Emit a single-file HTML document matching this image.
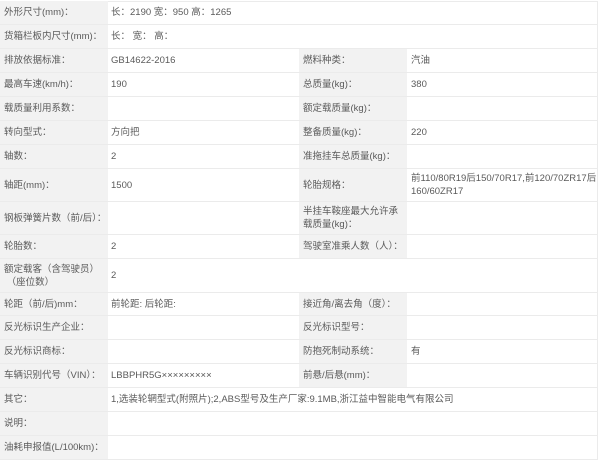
<!DOCTYPE html>
<html><head><meta charset="utf-8"><style>
*{margin:0;padding:0;box-sizing:border-box}
body{width:600px;height:461px;background:#fff;overflow:hidden;font-family:"Liberation Sans","Noto Sans CJK SC",sans-serif;font-size:9.5px;color:#5a5a5a;position:relative}
.r{position:absolute;left:0;width:598px;border-bottom:1px solid #ebebeb;border-right:1px solid #ebebeb}
.c{position:absolute;top:0;bottom:0;display:flex;align-items:center;line-height:13px}
.l1{left:0;width:108px;background:#f2f2f2;padding-left:4px}
.v1{left:108px;width:191px;padding-left:3px}
.l2{left:299px;width:108px;background:#f2f2f2;padding-left:4px}
.v2{left:407px;width:191px;padding-left:4px}
.vf{left:108px;width:490px;padding-left:3px}
</style></head><body>
<div class="r" style="top:0;height:2px;border-right:none"></div>
<div class="r" style="top:1px;height:24px"><div class="c l1">外形尺寸(mm)：</div><div class="c vf">长：2190 宽：950 高：1265</div></div>
<div class="r" style="top:25px;height:24px"><div class="c l1">货箱栏板内尺寸(mm)：</div><div class="c vf">长： 宽： 高：</div></div>
<div class="r" style="top:49px;height:24px"><div class="c l1">排放依据标准：</div><div class="c v1">GB14622-2016</div><div class="c l2">燃料种类：</div><div class="c v2">汽油</div></div>
<div class="r" style="top:73px;height:24px"><div class="c l1">最高车速(km/h)：</div><div class="c v1">190</div><div class="c l2">总质量(kg)：</div><div class="c v2">380</div></div>
<div class="r" style="top:97px;height:24px"><div class="c l1">载质量利用系数：</div><div class="c v1"></div><div class="c l2">额定载质量(kg)：</div><div class="c v2"></div></div>
<div class="r" style="top:121px;height:24px"><div class="c l1">转向型式：</div><div class="c v1">方向把</div><div class="c l2">整备质量(kg)：</div><div class="c v2">220</div></div>
<div class="r" style="top:145px;height:24px"><div class="c l1">轴数：</div><div class="c v1">2</div><div class="c l2">准拖挂车总质量(kg)：</div><div class="c v2"></div></div>
<div class="r" style="top:169px;height:33px"><div class="c l1">轴距(mm)：</div><div class="c v1">1500</div><div class="c l2">轮胎规格：</div><div class="c v2">前110/80R19后150/70R17,前120/70ZR17后160/60ZR17</div></div>
<div class="r" style="top:202px;height:33px"><div class="c l1">钢板弹簧片数（前/后）：</div><div class="c v1"></div><div class="c l2">半挂车鞍座最大允许承载质量(kg)：</div><div class="c v2"></div></div>
<div class="r" style="top:235px;height:24px"><div class="c l1">轮胎数：</div><div class="c v1">2</div><div class="c l2">驾驶室准乘人数（人）：</div><div class="c v2"></div></div>
<div class="r" style="top:259px;height:34px"><div class="c l1" style="padding-left:4px">额定载客（含驾驶员）<br>&nbsp;（座位数）</div><div class="c v1">2</div></div>
<div class="r" style="top:293px;height:23px"><div class="c l1">轮距（前/后)mm：</div><div class="c v1">前轮距: 后轮距:</div><div class="c l2">接近角/离去角（度）：</div><div class="c v2"></div></div>
<div class="r" style="top:316px;height:24px"><div class="c l1">反光标识生产企业：</div><div class="c v1"></div><div class="c l2">反光标识型号：</div><div class="c v2"></div></div>
<div class="r" style="top:340px;height:24px"><div class="c l1">反光标识商标：</div><div class="c v1"></div><div class="c l2">防抱死制动系统：</div><div class="c v2">有</div></div>
<div class="r" style="top:364px;height:24px"><div class="c l1">车辆识别代号（VIN）：</div><div class="c v1">LBBPHR5G×××××××××</div><div class="c l2">前悬/后悬(mm)：</div><div class="c v2"></div></div>
<div class="r" style="top:388px;height:24px"><div class="c l1">其它：</div><div class="c vf">1,选装轮辋型式(附照片);2,ABS型号及生产厂家:9.1MB,浙江益中智能电气有限公司</div></div>
<div class="r" style="top:412px;height:24px"><div class="c l1">说明：</div><div class="c vf"></div></div>
<div class="r" style="top:436px;height:24px"><div class="c l1">油耗申报值(L/100km)：</div><div class="c vf"></div></div>
</body></html>
